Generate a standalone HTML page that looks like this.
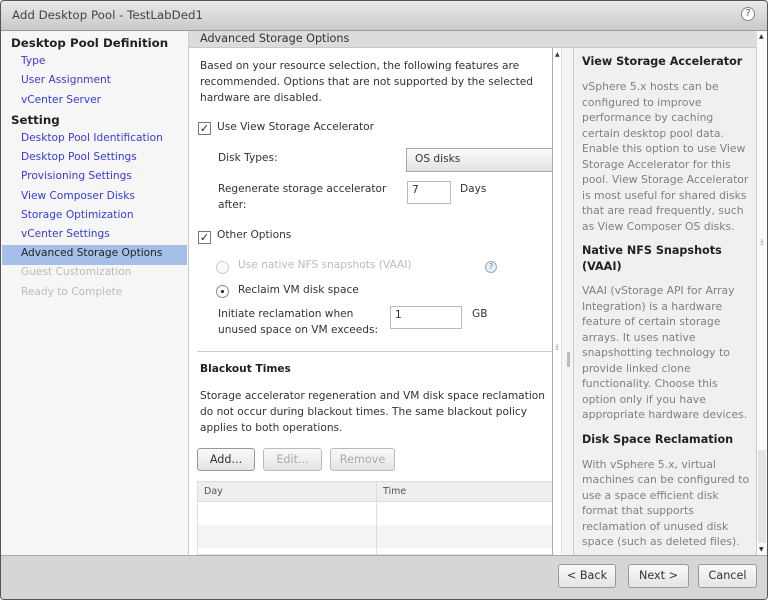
<!DOCTYPE html>
<html><head><style>
*{margin:0;padding:0;box-sizing:border-box}
body{width:768px;height:600px;position:relative;overflow:hidden;background:#fff;font-family:"DejaVu Sans","Liberation Sans",sans-serif;font-size:10.6px;color:#333}
.a{position:absolute;white-space:nowrap}
.nav{color:#3a3ad8}
.dis{color:#bbb}
.b{font-weight:bold}
.btn{position:absolute;border:1px solid #999;border-radius:3px;background:linear-gradient(#fafafa,#e4e4e4);text-align:center;font-size:11.2px;color:#333}
.cb{position:absolute;width:13px;height:13px;border:1px solid #777;background:#fff;font-size:11px;line-height:11px;text-align:center;color:#222}
.help div{position:absolute;left:8px;white-space:nowrap;color:#808080;font-size:10.8px}
.help .h{color:#222;font-weight:bold;font-size:11.2px}
</style></head><body>
<div class="a" style="left:0;top:0;width:768px;height:600px;border:1px solid #555;border-radius:4px"></div>
<div class="a" style="left:1px;top:1px;width:766px;height:30px;background:linear-gradient(#e9e9e9,#c9c9c9);border-bottom:1px solid #999;border-radius:4px 4px 0 0"></div>
<div class="a" style="left:12px;top:8px;font-size:11.8px;color:#444">Add Desktop Pool - TestLabDed1</div>
<div class="a" style="left:741px;top:7px;width:14px;height:14px;border:1px solid #888;border-radius:50%;background:#fff;font-size:10px;line-height:12px;text-align:center;color:#666">?</div>

<div class="a" style="left:1px;top:31px;width:188px;height:524px;background:#f6f6f6;border-right:1px solid #ccc"></div>
<div class="a b" style="left:11px;top:36px;font-size:11.8px;color:#222">Desktop Pool Definition</div>
<div class="a nav" style="left:21px;top:55px">Type</div>
<div class="a nav" style="left:21px;top:74px">User Assignment</div>
<div class="a nav" style="left:21px;top:94px">vCenter Server</div>
<div class="a b" style="left:11px;top:113px;font-size:11.8px;color:#222">Setting</div>
<div class="a nav" style="left:21px;top:132px">Desktop Pool Identification</div>
<div class="a nav" style="left:21px;top:151px">Desktop Pool Settings</div>
<div class="a nav" style="left:21px;top:170px">Provisioning Settings</div>
<div class="a nav" style="left:21px;top:190px">View Composer Disks</div>
<div class="a nav" style="left:21px;top:209px">Storage Optimization</div>
<div class="a nav" style="left:21px;top:228px">vCenter Settings</div>
<div class="a" style="left:2px;top:245px;width:185px;height:20px;background:#a4c0e8"></div>
<div class="a" style="left:21px;top:247px;color:#222">Advanced Storage Options</div>
<div class="a dis" style="left:21px;top:266px">Guest Customization</div>
<div class="a dis" style="left:21px;top:286px">Ready to Complete</div>

<div class="a" style="left:189px;top:31px;width:568px;height:17px;background:#dcdcdc;border-bottom:1px solid #c8c8c8"></div>
<div class="a" style="left:200px;top:32px;font-size:11.2px;color:#333">Advanced Storage Options</div>

<div class="a" style="left:200px;top:60px">Based on your resource selection, the following features are</div>
<div class="a" style="left:200px;top:76px">recommended. Options that are not supported by the selected</div>
<div class="a" style="left:200px;top:92px">hardware are disabled.</div>
<div class="cb" style="left:198px;top:122px">✓</div>
<div class="a" style="left:217px;top:121px">Use View Storage Accelerator</div>
<div class="a" style="left:218px;top:152px">Disk Types:</div>
<div class="a" style="left:406px;top:148px;width:147px;height:24px;border:1px solid #aaa;border-right:none;background:linear-gradient(#fbfbfb,#e2e2e2)"></div>
<div class="a" style="left:415px;top:153px">OS disks</div>
<div class="a" style="left:218px;top:183px">Regenerate storage accelerator</div>
<div class="a" style="left:218px;top:199px">after:</div>
<div class="a" style="left:407px;top:181px;width:44px;height:23px;border:1px solid #bbb"></div>
<div class="a" style="left:412px;top:184px">7</div>
<div class="a" style="left:460px;top:183px">Days</div>
<div class="cb" style="left:198px;top:231px">✓</div>
<div class="a" style="left:217px;top:229px">Other Options</div>
<div class="a" style="left:216px;top:261px;width:13px;height:13px;border:1px solid #ccc;border-radius:50%;background:#fafafa"></div>
<div class="a dis" style="left:238px;top:259px">Use native NFS snapshots (VAAI)</div>
<div class="a" style="left:485px;top:261px;width:12px;height:12px;border:1px solid #9ab;border-radius:50%;background:#e8f0fa;font-size:8px;line-height:10px;text-align:center;color:#58a">?</div>
<div class="a" style="left:216px;top:285px;width:13px;height:13px;border:1px solid #888;border-radius:50%;background:#fff"><div style="position:absolute;left:4px;top:4px;width:3px;height:3px;border-radius:50%;background:#222"></div></div>
<div class="a" style="left:238px;top:284px">Reclaim VM disk space</div>
<div class="a" style="left:218px;top:308px">Initiate reclamation when</div>
<div class="a" style="left:218px;top:324px">unused space on VM exceeds:</div>
<div class="a" style="left:390px;top:306px;width:72px;height:23px;border:1px solid #bbb"></div>
<div class="a" style="left:395px;top:309px">1</div>
<div class="a" style="left:472px;top:308px">GB</div>
<div class="a" style="left:197px;top:351px;width:355px;height:1px;background:#ccc"></div>
<div class="a b" style="left:200px;top:363px;color:#222">Blackout Times</div>
<div class="a" style="left:200px;top:390px">Storage accelerator regeneration and VM disk space reclamation</div>
<div class="a" style="left:200px;top:406px">do not occur during blackout times. The same blackout policy</div>
<div class="a" style="left:200px;top:422px">applies to both operations.</div>
<div class="btn" style="left:197px;top:448px;width:58px;height:23px;line-height:21px">Add...</div>
<div class="btn" style="left:263px;top:448px;width:59px;height:23px;line-height:21px;color:#aaa;border-color:#bbb">Edit...</div>
<div class="btn" style="left:330px;top:448px;width:65px;height:23px;line-height:21px;color:#aaa;border-color:#bbb">Remove</div>
<div class="a" style="left:197px;top:481px;width:356px;height:74px;border:1px solid #ddd;border-right:none"></div>
<div class="a" style="left:198px;top:482px;width:355px;height:20px;background:#eee;border-bottom:1px solid #ddd"></div>
<div class="a" style="left:198px;top:525px;width:355px;height:23px;background:#f4f4f4"></div>
<div class="a" style="left:376px;top:482px;width:1px;height:73px;background:#ddd"></div>
<div class="a" style="left:204px;top:486px;font-size:9.5px;color:#555">Day</div>
<div class="a" style="left:383px;top:486px;font-size:9.5px;color:#555">Time</div>

<div class="a" style="left:552px;top:48px;width:10px;height:507px;background:#fff;border-left:1px solid #aaa;border-right:1px solid #ddd"></div>
<div class="a" style="left:555px;top:51px;font-size:6px;color:#333">▲</div>
<div class="a" style="left:555px;top:343px;font-size:8px;color:#999;letter-spacing:-1px">⁞⁞</div>
<div class="a" style="left:562px;top:48px;width:11px;height:507px;background:#f4f4f4"></div>
<div class="a" style="left:567px;top:352px;width:3px;height:15px;background:#bbb"></div>

<div class="a help" style="left:573px;top:48px;width:184px;height:507px;background:#f0f0f0;border-left:1px solid #ccc;border-right:1px solid #ccc">
<div class="h" style="top:7px">View Storage Accelerator</div>
<div style="top:32px">vSphere 5.x hosts can be</div>
<div style="top:48px">configured to improve</div>
<div style="top:63px">performance by caching</div>
<div style="top:79px">certain desktop pool data.</div>
<div style="top:94px">Enable this option to use View</div>
<div style="top:110px">Storage Accelerator for this</div>
<div style="top:125px">pool. View Storage Accelerator</div>
<div style="top:141px">is most useful for shared disks</div>
<div style="top:156px">that are read frequently, such</div>
<div style="top:172px">as View Composer OS disks.</div>
<div class="h" style="top:196px">Native NFS Snapshots</div>
<div class="h" style="top:212px">(VAAI)</div>
<div style="top:236px">VAAI (vStorage API for Array</div>
<div style="top:252px">Integration) is a hardware</div>
<div style="top:267px">feature of certain storage</div>
<div style="top:283px">arrays. It uses native</div>
<div style="top:298px">snapshotting technology to</div>
<div style="top:314px">provide linked clone</div>
<div style="top:329px">functionality. Choose this</div>
<div style="top:345px">option only if you have</div>
<div style="top:360px">appropriate hardware devices.</div>
<div class="h" style="top:385px">Disk Space Reclamation</div>
<div style="top:410px">With vSphere 5.x, virtual</div>
<div style="top:425px">machines can be configured to</div>
<div style="top:441px">use a space efficient disk</div>
<div style="top:456px">format that supports</div>
<div style="top:472px">reclamation of unused disk</div>
<div style="top:487px">space (such as deleted files).</div>
</div>
<div class="a" style="left:757px;top:31px;width:10px;height:524px;background:#fafafa"></div>
<div class="a" style="left:759px;top:33px;font-size:6px;color:#333">▲</div>
<div class="a" style="left:759px;top:546px;font-size:6px;color:#333">▼</div>
<div class="a" style="left:758px;top:450px;width:8px;height:93px;background:#e4e4e4"></div>
<div class="a" style="left:760px;top:238px;font-size:8px;color:#999;letter-spacing:-1px">⁞⁞</div>

<div class="a" style="left:1px;top:555px;width:766px;height:44px;background:#d6d6d6;border-top:1px solid #aaa;border-radius:0 0 4px 4px"></div>
<div class="btn" style="left:558px;top:564px;width:58px;height:24px;line-height:22px">&lt; Back</div>
<div class="btn" style="left:628px;top:564px;width:61px;height:24px;line-height:22px">Next &gt;</div>
<div class="btn" style="left:698px;top:564px;width:59px;height:24px;line-height:22px">Cancel</div>
</body></html>
